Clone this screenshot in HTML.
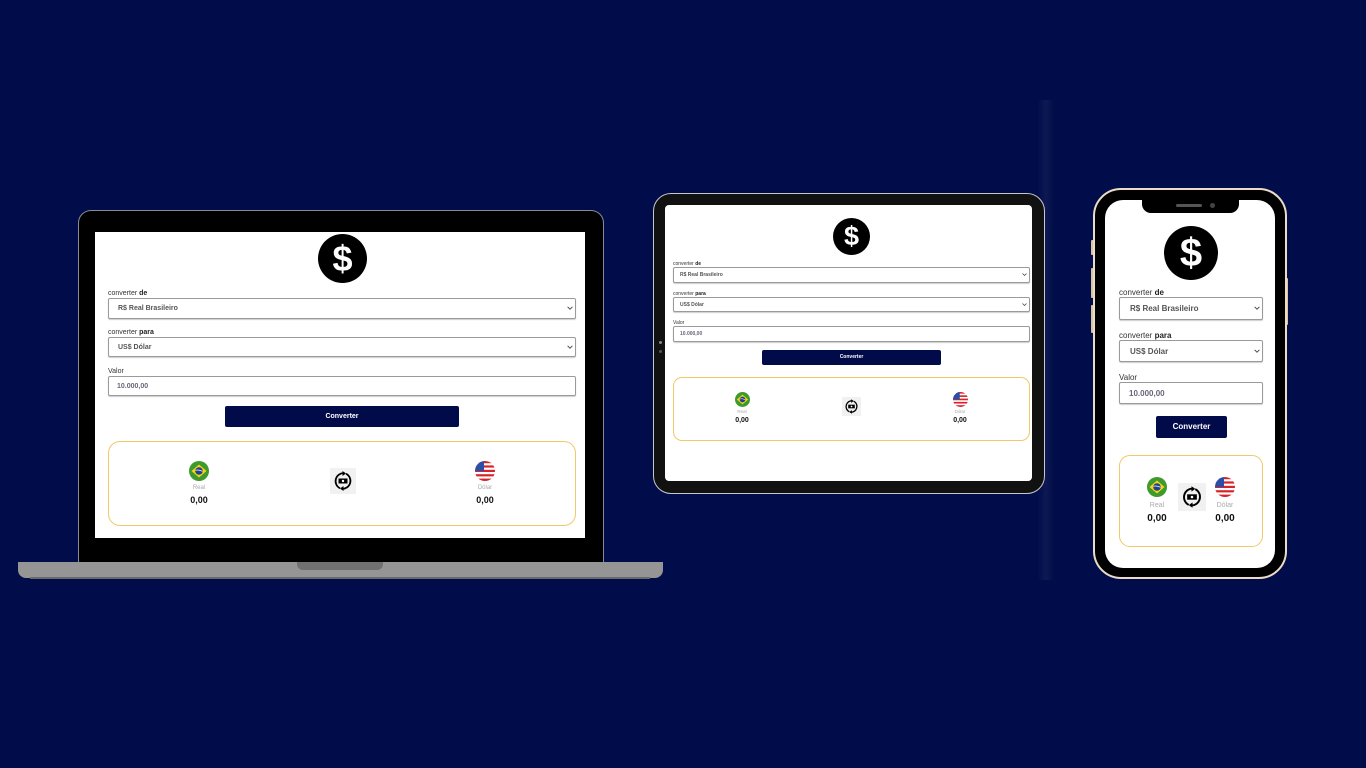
<!DOCTYPE html>
<html><head><meta charset="utf-8"><style>
*{margin:0;padding:0;box-sizing:border-box}
body{width:1366px;height:768px;background:#010d4a;position:relative;overflow:hidden;font-family:"Liberation Sans",Arial,sans-serif}
.a{position:absolute}
.lbl{position:absolute;color:#333;white-space:nowrap}
.lbl b{color:#222}
.sel{position:absolute;background:#fff;border:1px solid #9a9a9a;border-radius:2px;box-shadow:0 1px 1px rgba(0,0,0,.2);color:#555;font-weight:bold;white-space:nowrap}
.btn{position:absolute;background:#020b4a;color:#fff;font-weight:bold;text-align:center;border-radius:2px}
.box{position:absolute;border:1px solid #f0c968;background:#fff}
.cap{position:absolute;color:#aaa;text-align:center;white-space:nowrap}
.val{position:absolute;color:#111;font-weight:bold;text-align:center;white-space:nowrap}
.dol{position:absolute;background:#000;border-radius:50%;color:#fff;font-weight:bold;text-align:center}
svg{position:absolute;overflow:visible}
</style></head><body>
<svg width="0" height="0" style="position:absolute"><defs>
<symbol id="br" viewBox="0 0 20 20"><circle cx="10" cy="10" r="10" fill="#3f9a2e"/><path d="M10 3.5L17.5 10 10 16.5 2.5 10z" fill="#f6d416"/><circle cx="10" cy="10" r="3.8" fill="#23408e"/><path d="M6.5 9.3q3.5-1 7 1" stroke="#fff" stroke-width=".7" fill="none"/></symbol>
<symbol id="us" viewBox="0 0 20 20"><clipPath id="cc"><circle cx="10" cy="10" r="10"/></clipPath><g clip-path="url(#cc)"><rect width="20" height="20" fill="#fff"/><rect y="0" width="20" height="2.2" fill="#d8232a"/><rect y="4.4" width="20" height="2.2" fill="#d8232a"/><rect y="8.8" width="20" height="2.2" fill="#d8232a"/><rect y="13.2" width="20" height="2.2" fill="#d8232a"/><rect y="17.6" width="20" height="2.4" fill="#d8232a"/><rect width="9" height="10" fill="#2a4fa8"/></g></symbol>
<symbol id="sw" viewBox="0 0 26 26"><rect width="26" height="26" fill="#f1f1f1"/><path d="M14.5 5.2A8 8 0 0 0 10 20.3" stroke="#000" stroke-width="1.8" fill="none"/><path d="M11.5 20.8A8 8 0 0 0 16 5.7" stroke="#000" stroke-width="1.8" fill="none"/><path d="M12.5 3l3.5 2.5-3.5 2.5z" fill="#000"/><path d="M13.5 23l-3.5-2.5 3.5-2.5z" fill="#000"/><rect x="8.5" y="10.5" width="9" height="5" fill="#000"/><circle cx="13" cy="13" r="1.2" fill="#fff"/></symbol>
<symbol id="chev" viewBox="0 0 10 6"><path d="M1 1l4 4 4-4" stroke="#444" stroke-width="1.5" fill="none"/></symbol>
</defs></svg>

<div class="a" style="left:1038px;top:100px;width:16px;height:480px;background:linear-gradient(90deg,rgba(255,255,255,0),rgba(255,255,255,.05),rgba(255,255,255,0))"></div>

<!-- LAPTOP -->
<div class="a" style="left:78px;top:210px;width:526px;height:356px;background:#000;border:1px solid #8a8a95;border-radius:13px 13px 0 0"></div>
<div class="a" style="left:95px;top:232px;width:490px;height:306px;background:#fff"></div>
<div class="a" style="left:18px;top:562px;width:645px;height:16px;background:#959595;border-radius:0 0 8px 8px"></div>
<div class="a" style="left:30px;top:577px;width:620px;height:2px;background:#6a6a6a"></div>
<div class="a" style="left:297px;top:562px;width:86px;height:8px;background:#717171;border-radius:0 0 6px 6px"></div>
<div class="dol" style="left:318px;top:234px;width:49px;height:49px;font-size:36px;line-height:49px">$</div>
<div class="lbl" style="left:108px;top:290px;font-size:7px">converter <b>de</b></div>
<div class="sel" style="left:108px;top:298px;width:468px;height:21px;font-size:7px;line-height:19px;padding-left:9px">R$ Real Brasileiro</div>
<svg style="left:567px;top:306px" width="6" height="4"><use href="#chev"/></svg>
<div class="lbl" style="left:108px;top:329px;font-size:7px">converter <b>para</b></div>
<div class="sel" style="left:108px;top:337px;width:468px;height:20px;font-size:7px;line-height:19px;padding-left:9px">US$ Dólar</div>
<svg style="left:567px;top:345px" width="6" height="4"><use href="#chev"/></svg>
<div class="lbl" style="left:108px;top:368px;font-size:7px">Valor</div>
<div class="sel" style="left:108px;top:376px;width:468px;height:20px;font-size:7px;line-height:19px;padding-left:8px;color:#667">10.000,00</div>
<div class="btn" style="left:225px;top:406px;width:234px;height:21px;font-size:7px;line-height:21px">Converter</div>
<div class="box" style="left:108px;top:441px;width:468px;height:85px;border-radius:12px"></div>
<svg style="left:189px;top:461px" width="20" height="20"><use href="#br"/></svg>
<svg style="left:475px;top:461px" width="20" height="20"><use href="#us"/></svg>
<svg style="left:330px;top:468px" width="26" height="26"><use href="#sw"/></svg>
<div class="cap" style="left:179px;top:485px;width:40px;font-size:6px">Real</div>
<div class="cap" style="left:465px;top:485px;width:40px;font-size:6px">Dólar</div>
<div class="val" style="left:179px;top:495px;width:40px;font-size:9px">0,00</div>
<div class="val" style="left:465px;top:495px;width:40px;font-size:9px">0,00</div>

<!-- TABLET -->
<div class="a" style="left:653px;top:193px;width:392px;height:301px;background:#111;border:1px solid #c8c8cc;border-radius:18px"></div>
<div class="a" style="left:665px;top:205px;width:367px;height:276px;background:#fff;border-radius:4px"></div>
<div class="a" style="left:659px;top:341px;width:3px;height:3px;background:#888;border-radius:50%"></div>
<div class="a" style="left:659px;top:350px;width:3px;height:3px;background:#555;border-radius:50%"></div>
<div class="dol" style="left:833px;top:218px;width:37px;height:37px;font-size:27px;line-height:37px">$</div>
<div class="lbl" style="left:673px;top:261px;font-size:5px">converter <b>de</b></div>
<div class="sel" style="left:673px;top:267px;width:357px;height:16px;font-size:5px;line-height:14px;padding-left:6px">R$ Real Brasileiro</div>
<svg style="left:1022px;top:273px" width="5" height="3"><use href="#chev"/></svg>
<div class="lbl" style="left:673px;top:291px;font-size:5px">converter <b>para</b></div>
<div class="sel" style="left:673px;top:297px;width:357px;height:15px;font-size:5px;line-height:14px;padding-left:6px">US$ Dólar</div>
<svg style="left:1022px;top:303px" width="5" height="3"><use href="#chev"/></svg>
<div class="lbl" style="left:673px;top:320px;font-size:5px">Valor</div>
<div class="sel" style="left:673px;top:326px;width:357px;height:16px;font-size:5px;line-height:14px;padding-left:6px;color:#667">10.000,00</div>
<div class="btn" style="left:762px;top:350px;width:179px;height:15px;font-size:5px;line-height:15px">Converter</div>
<div class="box" style="left:673px;top:377px;width:357px;height:64px;border-radius:9px"></div>
<svg style="left:735px;top:392px" width="15" height="15"><use href="#br"/></svg>
<svg style="left:953px;top:392px" width="15" height="15"><use href="#us"/></svg>
<svg style="left:842px;top:397px" width="19" height="19"><use href="#sw"/></svg>
<div class="cap" style="left:727px;top:409px;width:30px;font-size:4.5px">Real</div>
<div class="cap" style="left:945px;top:409px;width:30px;font-size:4.5px">Dólar</div>
<div class="val" style="left:727px;top:417px;width:30px;font-size:7px">0,00</div>
<div class="val" style="left:945px;top:417px;width:30px;font-size:7px">0,00</div>

<!-- PHONE -->
<div class="a" style="left:1091px;top:240px;width:3px;height:15px;background:#d9c3a5;border-radius:1px"></div>
<div class="a" style="left:1091px;top:268px;width:3px;height:30px;background:#d9c3a5;border-radius:1px"></div>
<div class="a" style="left:1091px;top:305px;width:3px;height:28px;background:#d9c3a5;border-radius:1px"></div>
<div class="a" style="left:1285px;top:278px;width:3px;height:47px;background:#d9c3a5;border-radius:1px"></div>
<div class="a" style="left:1093px;top:188px;width:194px;height:391px;background:#000;border:2px solid #ecdcc6;border-radius:28px"></div>
<div class="a" style="left:1105px;top:200px;width:170px;height:368px;background:#fff;border-radius:18px"></div>
<div class="a" style="left:1142px;top:198px;width:97px;height:15px;background:#000;border-radius:0 0 9px 9px"></div>
<div class="a" style="left:1176px;top:204px;width:26px;height:3px;background:#555;border-radius:2px"></div>
<div class="a" style="left:1210px;top:203px;width:5px;height:5px;background:#444;border-radius:50%"></div>
<div class="dol" style="left:1164px;top:226px;width:54px;height:54px;font-size:40px;line-height:54px">$</div>
<div class="lbl" style="left:1119px;top:288px;font-size:8px">converter <b>de</b></div>
<div class="sel" style="left:1119px;top:297px;width:144px;height:23px;font-size:8px;line-height:21px;padding-left:10px">R$ Real Brasileiro</div>
<svg style="left:1254px;top:306px" width="6" height="4"><use href="#chev"/></svg>
<div class="lbl" style="left:1119px;top:331px;font-size:8px">converter <b>para</b></div>
<div class="sel" style="left:1119px;top:340px;width:144px;height:22px;font-size:8px;line-height:21px;padding-left:10px">US$ Dólar</div>
<svg style="left:1254px;top:349px" width="6" height="4"><use href="#chev"/></svg>
<div class="lbl" style="left:1119px;top:373px;font-size:8px">Valor</div>
<div class="sel" style="left:1119px;top:382px;width:144px;height:22px;font-size:8px;line-height:21px;padding-left:9px;color:#667">10.000,00</div>
<div class="btn" style="left:1156px;top:416px;width:71px;height:22px;font-size:8px;line-height:22px">Converter</div>
<div class="box" style="left:1119px;top:455px;width:144px;height:92px;border-radius:11px"></div>
<svg style="left:1147px;top:477px" width="20" height="20"><use href="#br"/></svg>
<svg style="left:1215px;top:477px" width="20" height="20"><use href="#us"/></svg>
<svg style="left:1178px;top:483px" width="28" height="28"><use href="#sw"/></svg>
<div class="cap" style="left:1137px;top:502px;width:40px;font-size:7px">Real</div>
<div class="cap" style="left:1205px;top:502px;width:40px;font-size:7px">Dólar</div>
<div class="val" style="left:1137px;top:513px;width:40px;font-size:10px">0,00</div>
<div class="val" style="left:1205px;top:513px;width:40px;font-size:10px">0,00</div>
</body></html>
